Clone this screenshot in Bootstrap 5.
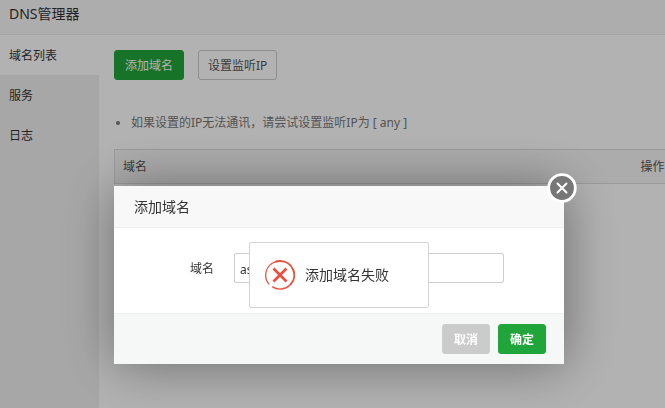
<!DOCTYPE html>
<html lang="zh-CN">
<head>
<meta charset="utf-8">
<meta name="viewport" content="width=device-width, initial-scale=1">
<title>DNS管理器</title>
<link href="https://cdn.jsdelivr.net/npm/bootstrap@5.3.0/dist/css/bootstrap.min.css" rel="stylesheet">
<style>
body{font-family:"Noto Sans","Noto Sans CJK SC",sans-serif;font-size:12px;line-height:18px;color:#333;background:#fff}
.panel-title{font-size:14px;line-height:20px;font-weight:400;padding:4px 9px 10px;background:#f8f8f8;border-bottom:1px solid #eee}
.side-menu{flex:0 0 99px;background:#f0f0f1}
.side-menu a{color:#333;line-height:20px;padding:11px 9px 9px}
.side-menu a.active{background:#fff}
.main-pane{padding:15px 0 0 15px;min-width:0}
.btn-sm-bt{--bs-btn-font-size:12px;--bs-btn-line-height:18px;--bs-btn-padding-x:10px;--bs-btn-border-radius:3px;padding-top:6px;padding-bottom:4px}
.btn-green{--bs-btn-color:#fff;--bs-btn-bg:#20a53a;--bs-btn-border-color:#20a53a;--bs-btn-hover-color:#fff;--bs-btn-hover-bg:#10952a;--bs-btn-hover-border-color:#10952a}
.btn-plain{--bs-btn-color:#555;--bs-btn-bg:#fff;--bs-btn-border-color:#ccc;--bs-btn-padding-x:9px}
.btn-gray{--bs-btn-color:#fff;--bs-btn-bg:#cbcbcb;--bs-btn-border-color:#cbcbcb}
.tool-row{gap:14px}
.tips{color:#777;padding-left:17px;margin:34px 0 17px}
.domain-table{width:640px;max-width:none;border:1px solid #ddd}
.domain-table th{font-weight:400;color:#555;background:#f6f6f6;padding:8px 8px 7px;line-height:18px}
.domain-table th.op{width:121px}
.shade{background:rgba(0,0,0,.3)}
.layers{padding:186px 0 0 13px}
.dialog{width:450px;max-width:100%;box-shadow:1px 1px 50px rgba(0,0,0,.4)}
.dialog-title{font-size:14px;line-height:20px;font-weight:400;padding:11px 20px 10px;background:#f8f8f8;border-bottom:1px solid #eee}
.dialog-body{padding:25px 60px 30px 20px}
.dialog-body label{width:80px;padding-top:2px;color:#333}
.dialog-body input{font-size:12px;line-height:18px;padding:6px 5px 4px;border:1px solid #ccc;border-radius:2px;color:#333;height:30px;width:270px}
.dialog-foot{padding:10px 18px;background:#f6f8f8;border-top:1px solid #edf1f2}
.dialog-foot .btn{min-width:48px}
.close-round{top:-13px;right:-13px;width:30px;height:30px}
.toast-box{top:56px;left:135px;width:180px;padding:16px 15px;gap:10px;border:1px solid #d3d4d3;border-radius:2px;font-size:14px;line-height:32px;color:#333}
</style>
</head>
<body class="vh-100 overflow-hidden">
<div class="d-flex flex-column h-100">
  <h1 class="panel-title m-0">DNS管理器</h1>
  <div class="d-flex flex-grow-1">
    <nav class="side-menu nav flex-column">
      <a class="text-decoration-none active" href="#">域名列表</a>
      <a class="text-decoration-none" href="#">服务</a>
      <a class="text-decoration-none" href="#">日志</a>
    </nav>
    <main class="main-pane flex-grow-1 overflow-hidden">
      <div class="tool-row d-flex">
        <button type="button" class="btn btn-sm-bt btn-green">添加域名</button>
        <button type="button" class="btn btn-sm-bt btn-plain">设置监听IP</button>
      </div>
      <ul class="tips"><li>如果设置的IP无法通讯，请尝试设置监听IP为 [ any ]</li></ul>
      <table class="domain-table">
        <thead><tr><th scope="col">域名</th><th scope="col" class="op">操作</th></tr></thead>
      </table>
    </main>
  </div>
</div>

<div class="shade position-fixed top-0 start-0 w-100 h-100"></div>
<div class="layers position-fixed top-0 start-0 w-100 h-100 d-flex justify-content-center align-items-start">
  <section class="dialog position-relative bg-white" role="dialog" aria-labelledby="dlg-title">
    <h2 class="dialog-title m-0" id="dlg-title">添加域名</h2>
    <form>
      <div class="dialog-body d-flex align-items-center">
        <label class="text-end" for="domain">域名</label>
        <input class="ms-auto" type="text" id="domain" value="asd">
      </div>
      <div class="dialog-foot d-flex justify-content-end gap-2">
        <button type="button" class="btn btn-sm-bt btn-gray fw-bold">取消</button>
        <button type="button" class="btn btn-sm-bt btn-green fw-bold">确定</button>
      </div>
    </form>
    <button type="button" class="close-round position-absolute border-0 bg-transparent p-0 d-flex" aria-label="关闭">
      <svg width="30" height="30" viewBox="0 0 30 30"><circle cx="15" cy="15" r="13.3" fill="#777" stroke="#fff" stroke-width="2.8"/><path d="M10.5 10.5l9 9M19.5 10.5l-9 9" stroke="#fff" stroke-width="2" stroke-linecap="round"/></svg>
    </button>
    <div class="toast-box position-absolute bg-white d-flex align-items-center" role="alert">
      <svg width="30" height="30" viewBox="0 0 30 30" fill="none" stroke="#e9513f"><path d="M4.2 24.4A14 14 0 0 1 10 2" stroke-width="1.3"/><path d="M10 2A14 14 0 0 1 15 1A14 14 0 0 1 25 25" stroke-width="2"/><path d="M25 25A14 14 0 0 1 7.2 26.7" stroke-width="1.4"/><path d="M8.5 8.5l13 13M21.5 8.5l-13 13" stroke-width="2.8"/></svg>
      <span>添加域名失败</span>
    </div>
  </section>
</div>
<script src="https://cdn.jsdelivr.net/npm/bootstrap@5.3.0/dist/js/bootstrap.bundle.min.js"></script>
</body>
</html>
